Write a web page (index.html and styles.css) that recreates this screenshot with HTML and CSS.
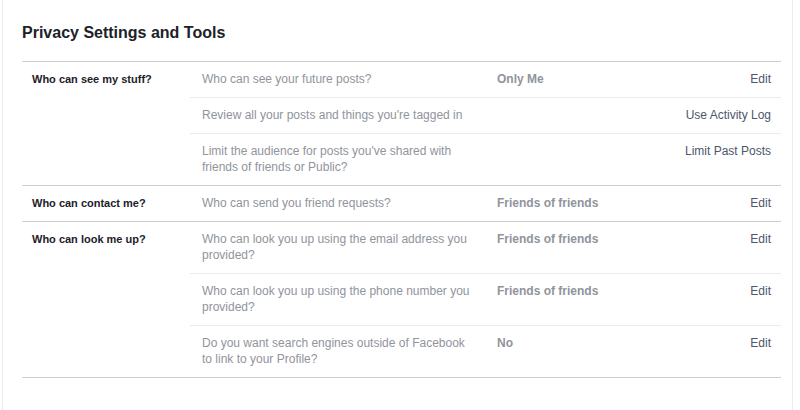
FILE: index.html
```html
<!DOCTYPE html>
<html lang="en">
<head>
<meta charset="utf-8">
<title>Privacy Settings and Tools</title>
<link rel="stylesheet" href="styles.css">
</head>
<body>
<div class="page">
  <h1 class="title">Privacy Settings and Tools</h1>
  <div class="table">
    <section class="group">
      <div class="label">Who can see my stuff?</div>
      <div class="rows">
        <div class="row">
          <div class="question">Who can see your future posts?</div>
          <div class="value">Only Me</div>
          <a class="action" href="#">Edit</a>
        </div>
        <div class="row">
          <div class="question wide">Review all your posts and things you're tagged in</div>
          <a class="action" href="#">Use Activity Log</a>
        </div>
        <div class="row">
          <div class="question">Limit the audience for posts you've shared with friends of friends or Public?</div>
          <div class="value"></div>
          <a class="action" href="#">Limit Past Posts</a>
        </div>
      </div>
    </section>
    <section class="group">
      <div class="label">Who can contact me?</div>
      <div class="rows">
        <div class="row">
          <div class="question">Who can send you friend requests?</div>
          <div class="value">Friends of friends</div>
          <a class="action" href="#">Edit</a>
        </div>
      </div>
    </section>
    <section class="group">
      <div class="label">Who can look me up?</div>
      <div class="rows">
        <div class="row">
          <div class="question">Who can look you up using the email address you provided?</div>
          <div class="value">Friends of friends</div>
          <a class="action" href="#">Edit</a>
        </div>
        <div class="row">
          <div class="question">Who can look you up using the phone number you provided?</div>
          <div class="value">Friends of friends</div>
          <a class="action" href="#">Edit</a>
        </div>
        <div class="row">
          <div class="question">Do you want search engines outside of Facebook to link to your Profile?</div>
          <div class="value">No</div>
          <a class="action" href="#">Edit</a>
        </div>
      </div>
    </section>
  </div>
</div>
</body>
</html>
```

FILE: styles.css
```css
* { box-sizing: border-box; }

html, body {
  margin: 0;
  padding: 0;
  background: #ffffff;
}

body {
  font-family: "Liberation Sans", Arial, Helvetica, sans-serif;
  font-size: 12px;
  color: #1d2129;
}

.page {
  margin-left: 2px;
  width: 791px;
  height: 410px;
  border-left: 1px solid #ececec;
  border-right: 1px solid #ececec;
  padding: 23px 11px 0 19px;
}

.title {
  margin: 0 0 18px 0;
  font-size: 16px;
  line-height: 20px;
  font-weight: bold;
  color: #1d2129;
}

.table {
  border-bottom: 1px solid #ccd0d5;
}

.group {
  display: grid;
  grid-template-columns: 168px 1fr;
  border-top: 1px solid #ccd0d5;
}

.label {
  padding: 9px 10px 9px 10px;
  font-weight: bold;
  font-size: 11px;
  line-height: 16px;
  color: #1d2129;
}

.rows {
  display: flex;
  flex-direction: column;
}

.row {
  display: grid;
  grid-template-columns: 297px 1fr auto;
  padding: 9px 10px 10px 0;
  line-height: 16px;
  border-top: 1px solid #e9ebee;
}

.row:first-child {
  border-top: none;
}

.question {
  padding: 0 10px 0 12px;
  color: #90949c;
}

.question.wide {
  grid-column: 1 / 3;
}

.value {
  padding-left: 10px;
  font-weight: bold;
  color: #90949c;
}

.action {
  color: #4d566b;
  text-decoration: none;
  text-align: right;
}
```
